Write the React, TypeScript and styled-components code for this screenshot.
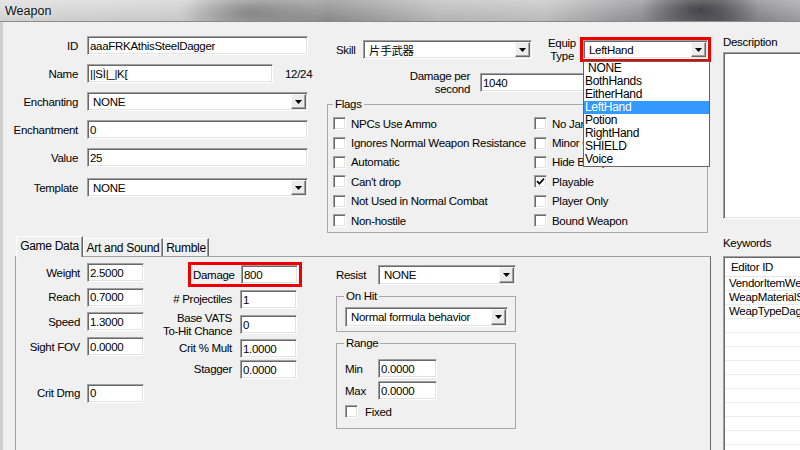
import React from 'react';
import styled, { createGlobalStyle, css } from 'styled-components';

// --- STYLES ---
const GlobalStyle = createGlobalStyle`
  *, *::before, *::after { box-sizing: border-box; }
  html, body { margin: 0; padding: 0; }
  body {
    width: 800px;
    height: 450px;
    overflow: hidden;
    background: #f0f0f0;
    color: #000;
    font-family: "Liberation Sans", "Noto Sans CJK JP", sans-serif;
    font-size: 11.5px;
    letter-spacing: -0.3px;
  }
`;

const sunken = css`
  border: 1px solid;
  border-color: #a0a0a0 #ffffff #ffffff #a0a0a0;
  box-shadow: inset 1px 1px 0 #696969, inset -1px -1px 0 #e3e3e3;
`;

const Window = styled.div`
  width: 800px;
  height: 450px;
  display: flex;
  flex-direction: column;
  overflow: hidden;
`;

const TitleBar = styled.div`
  flex: none;
  height: 22px;
  display: flex;
  align-items: center;
  padding-left: 5px;
  border-bottom: 1px solid #8a8a8a;
  background:
    radial-gradient(ellipse 70px 22px at 250px 12px, rgba(80, 80, 80, 0.45), transparent),
    radial-gradient(ellipse 60px 24px at 700px 10px, rgba(40, 40, 48, 0.7), transparent),
    linear-gradient(180deg, rgba(255, 255, 255, 0.25), rgba(0, 0, 0, 0.05)),
    linear-gradient(90deg, #dcdcdc 0%, #d2d2d2 22%, #a8a8a8 34%, #8e8e8e 41%, #bdbdbd 55%, #c4c4c4 68%, #8a8a8e 82%, #707074 90%, #a3a3a6 100%);
`;

const Title = styled.span`
  font-size: 12.5px;
  letter-spacing: 0;
  color: #111;
  text-shadow: 0 0 6px rgba(255, 255, 255, 0.8);
`;

const Body = styled.div`
  flex: 1;
  min-height: 0;
  display: flex;
  border-left: 3px solid;
  border-image: linear-gradient(90deg, #cfcfcf 0 66%, #7c7c7c 66%) 1;
`;

const MainColumn = styled.div`
  flex: none;
  width: 720px;
  display: flex;
  flex-direction: column;
`;

const SideColumn = styled.div`
  flex: 1;
  min-width: 0;
  overflow: hidden;
  padding-top: 13px;
  display: flex;
  flex-direction: column;
`;

const TopArea = styled.div`
  flex: none;
  height: 214px;
  display: flex;
`;

const LeftFields = styled.div`
  width: 324px;
  padding-top: 14px;
  display: flex;
  flex-direction: column;
  gap: 9px;
`;

const FieldRow = styled.div<{ $mt?: number }>`
  display: flex;
  align-items: center;
  height: 19px;
  margin-top: ${({ $mt }) => $mt ?? 0}px;
`;

const FieldLabel = styled.span`
  width: 75px;
  margin-right: 9px;
  text-align: right;
  white-space: nowrap;
`;

const Counter = styled.span`
  margin-left: 12px;
`;

const Input = styled.input<{ $w: number }>`
  ${sunken}
  width: ${({ $w }) => $w}px;
  height: 19px;
  flex: none;
  padding: 0 2px;
  background: #fff;
  font: inherit;
  letter-spacing: inherit;
  color: #000;
  outline: none;
`;

const SelectBox = styled.div<{ $w: number; $h?: number }>`
  ${sunken}
  width: ${({ $w }) => $w}px;
  height: ${({ $h }) => $h ?? 19}px;
  flex: none;
  display: flex;
  align-items: center;
  padding-left: 5px;
  background: #fff;
  white-space: nowrap;
  overflow: hidden;
`;

const SelectText = styled.span`
  flex: 1;
  min-width: 0;
`;

const ArrowButton = styled.span`
  flex: none;
  align-self: stretch;
  width: 15px;
  margin: 1px;
  display: flex;
  align-items: center;
  justify-content: center;
  background: #ececec;
  border: 1px solid;
  border-color: #f8f8f8 #696969 #696969 #f8f8f8;
  box-shadow: inset -1px -1px 0 #a0a0a0;
`;

const MiddleArea = styled.div`
  width: 384px;
  display: flex;
  flex-direction: column;
`;

const SkillRow = styled.div`
  display: flex;
  align-items: center;
  height: 25px;
  margin-top: 15px;
  padding-left: 9px;
`;

const InlineLabel = styled.span<{ $w: number }>`
  flex: none;
  width: ${({ $w }) => $w}px;
  white-space: nowrap;
`;

const StackLabel = styled.span<{ $w: number; $mr: number }>`
  flex: none;
  width: ${({ $w }) => $w}px;
  margin-right: ${({ $mr }) => $mr}px;
  line-height: 12.5px;
  text-align: right;
  white-space: nowrap;
`;

const Spacer = styled.span<{ $w: number }>`
  flex: none;
  width: ${({ $w }) => $w}px;
`;

const RedFrame = styled.div<{ $pad?: string }>`
  position: relative;
  flex: none;
  display: flex;
  align-items: center;
  border: 3px solid #ee0000;
  padding: ${({ $pad }) => $pad ?? '0'};
`;

const DropList = styled.ul`
  position: absolute;
  top: calc(100% + 2px);
  left: 0;
  z-index: 10;
  width: 127px;
  margin: 0;
  padding: 0;
  list-style: none;
  background: #fff;
  border: 1px solid #646464;
`;

const DropItem = styled.li<{ $active?: boolean }>`
  height: 13px;
  line-height: 13px;
  padding-left: 1px;
  font-size: 12px;
  white-space: nowrap;
  background: ${({ $active }) => ($active ? '#3399ff' : 'transparent')};
  color: ${({ $active }) => ($active ? '#fff' : '#000')};
`;

const DpsRow = styled.div`
  display: flex;
  align-items: center;
  height: 26px;
  margin-top: 7.5px;
  padding-left: 9px;
`;

const GroupBox = styled.fieldset<{ $w: number; $pad: string; $mt?: number }>`
  width: ${({ $w }) => $w}px;
  margin: ${({ $mt }) => $mt ?? 0}px 0 0 0;
  padding: ${({ $pad }) => $pad};
  min-width: 0;
  border: 1px solid #a8a8a8;
`;

const Legend = styled.legend<{ $ml?: number }>`
  padding: 0 2px;
  margin-left: ${({ $ml }) => $ml ?? 0}px;
  line-height: 14px;
`;

const CheckGrid = styled.div`
  display: grid;
  grid-template-columns: 201px 1fr;
  grid-template-rows: repeat(6, 19.4px);
  grid-auto-flow: column;
  align-items: center;
`;

const CheckItem = styled.label<{ $gap?: number }>`
  display: flex;
  align-items: center;
  gap: ${({ $gap }) => $gap ?? 5}px;
  white-space: nowrap;
  overflow: hidden;
`;

const CheckBox = styled.span`
  ${sunken}
  flex: none;
  width: 13px;
  height: 13px;
  background: #fff;
  display: flex;
  align-items: center;
  justify-content: center;
`;

const TabArea = styled.div`
  display: flex;
  flex-direction: column;
`;

const TabStrip = styled.div`
  display: flex;
  align-items: flex-end;
  height: 20px;
  padding-left: 13px;
  position: relative;
  z-index: 1;
`;

const Tab = styled.div<{ $active?: boolean; $w: number }>`
  width: ${({ $w }) => $w}px;
  height: ${({ $active }) => ($active ? 21 : 18)}px;
  margin-bottom: ${({ $active }) => ($active ? -1 : 0)}px;
  display: flex;
  align-items: ${({ $active }) => ($active ? 'flex-start' : 'center')};
  justify-content: center;
  padding-top: ${({ $active }) => ($active ? 2 : 0)}px;
  background: #f0f0f0;
  border: 1px solid;
  border-color: #ffffff #696969 transparent #ffffff;
  border-bottom: none;
  box-shadow: inset -1px 0 0 #a0a0a0;
  white-space: nowrap;
  font-size: 12px;
`;

const TabPane = styled.div`
  margin-left: 12px;
  width: 696px;
  height: 200px;
  border: 1px solid #a0a0a0;
  border-right-color: #696969;
  display: flex;
  align-items: flex-start;
  padding-top: 5px;
`;

const StatColumn = styled.div`
  display: flex;
  flex-direction: column;
  gap: 5.7px;
  margin-top: 1px;
`;

const StatLabel = styled.span`
  width: 64px;
  margin-right: 7px;
  text-align: right;
  white-space: nowrap;
`;

const DamageColumn = styled.div`
  width: 158px;
  display: flex;
  flex-direction: column;
  align-items: flex-end;
`;

const DamageRow = styled.div<{ $mt: number; $h?: number }>`
  display: flex;
  align-items: center;
  height: ${({ $h }) => $h ?? 19}px;
  margin-top: ${({ $mt }) => $mt}px;
  margin-right: 5px;
`;

const DamageLabel = styled.span`
  margin-right: 8px;
  line-height: 13px;
  text-align: right;
  white-space: nowrap;
`;

const ResistColumn = styled.div`
  width: 180px;
  margin-left: 34px;
  margin-top: 3px;
  display: flex;
  flex-direction: column;
`;

const PlainRow = styled.div<{ $mt?: number; $h?: number }>`
  display: flex;
  align-items: center;
  height: ${({ $h }) => $h ?? 19}px;
  margin-top: ${({ $mt }) => $mt ?? 0}px;
`;

const SideLabel = styled.div<{ $mt?: number }>`
  line-height: 14px;
  margin-top: ${({ $mt }) => $mt ?? 0}px;
  white-space: nowrap;
`;

const DescriptionBox = styled.div`
  ${sunken}
  flex: none;
  width: 120px;
  height: 167px;
  margin-top: 3px;
  background: #fff;
`;

const KeywordList = styled.div`
  ${sunken}
  flex: none;
  width: 120px;
  height: 200px;
  margin-top: 6px;
  background: #fff;
  padding: 1px;
`;

const ListHeader = styled.div`
  height: 19px;
  line-height: 18px;
  padding-left: 6px;
  border-bottom: 1px solid #e5e5e5;
  white-space: nowrap;
`;

const ListRow = styled.div`
  height: 14px;
  line-height: 13px;
  padding-left: 4px;
  border-bottom: 1px solid #ececec;
  white-space: nowrap;
`;
// --- END STYLES ---

const Arrow = () => (
  <svg width="7" height="4" viewBox="0 0 7 4">
    <path d="M0 0h7L3.5 4z" fill="#000" />
  </svg>
);

const Select: React.FC<{ w: number; h?: number; value: string }> = ({ w, h, value }) => (
  <SelectBox $w={w} $h={h}>
    <SelectText>{value}</SelectText>
    <ArrowButton>
      <Arrow />
    </ArrowButton>
  </SelectBox>
);

const Box: React.FC<{ w: number; value: string }> = ({ w, value }) => (
  <Input $w={w} value={value} readOnly />
);

const Check: React.FC<{ label: string; checked?: boolean; gap?: number }> = ({ label, checked, gap }) => (
  <CheckItem $gap={gap}>
    <CheckBox>
      {checked && (
        <svg width="9" height="9" viewBox="0 0 9 9">
          <path d="M1 4.2l2.4 2.5L8 1.6" fill="none" stroke="#000" strokeWidth="1.7" />
        </svg>
      )}
    </CheckBox>
    {label}
  </CheckItem>
);

const flagsLeft = [
  'NPCs Use Ammo',
  'Ignores Normal Weapon Resistance',
  'Automatic',
  "Can't drop",
  'Not Used in Normal Combat',
  'Non-hostile',
];
const flagsRight = ['No Jam After Reload', 'Minor Crime', 'Hide Backpack', 'Playable', 'Player Only', 'Bound Weapon'];
const equipTypes = ['\u00a0NONE', 'BothHands', 'EitherHand', 'LeftHand', 'Potion', 'RightHand', 'SHIELD', 'Voice'];
const stats = [
  ['Weight', '2.5000'],
  ['Reach', '0.7000'],
  ['Speed', '1.3000'],
  ['Sight FOV', '0.0000'],
];
const keywords = ['VendorItemWeapon', 'WeapMaterialSteel', 'WeapTypeDagger', '', '', '', '', '', '', '', '', ''];

const App: React.FC = () => (
  <>
    <GlobalStyle />
    <Window>
      <TitleBar>
        <Title>Weapon</Title>
      </TitleBar>
      <Body>
        <MainColumn>
          <TopArea>
            <LeftFields>
              <FieldRow>
                <FieldLabel>ID</FieldLabel>
                <Box w={221} value="aaaFRKAthisSteelDagger" />
              </FieldRow>
              <FieldRow>
                <FieldLabel>Name</FieldLabel>
                <Box w={186} value="||SÌ|_|K[" />
                <Counter>12/24</Counter>
              </FieldRow>
              <FieldRow>
                <FieldLabel>Enchanting</FieldLabel>
                <Select w={221} value="NONE" />
              </FieldRow>
              <FieldRow>
                <FieldLabel>Enchantment</FieldLabel>
                <Box w={221} value="0" />
              </FieldRow>
              <FieldRow>
                <FieldLabel>Value</FieldLabel>
                <Box w={221} value="25" />
              </FieldRow>
              <FieldRow $mt={2}>
                <FieldLabel>Template</FieldLabel>
                <Select w={221} value="NONE" />
              </FieldRow>
            </LeftFields>

            <MiddleArea>
              <SkillRow>
                <InlineLabel $w={27}>Skill</InlineLabel>
                <Select w={169} value="片手武器" />
                <Spacer $w={16} />
                <StackLabel $w={26} $mr={6}>
                  Equip
                  <br />
                  Type
                </StackLabel>
                <RedFrame>
                  <Select w={125} value="LeftHand" />
                  <DropList>
                    {equipTypes.map((t) => (
                      <DropItem key={t} $active={t === 'LeftHand'}>
                        {t}
                      </DropItem>
                    ))}
                  </DropList>
                </RedFrame>
              </SkillRow>
              <DpsRow>
                <StackLabel $w={134} $mr={10}>
                  Damage per
                  <br />
                  second
                </StackLabel>
                <Box w={130} value="1040" />
              </DpsRow>
              <GroupBox $w={381} $pad="3px 5px 2px 5px" $mt={1.5}>
                <Legend>Flags</Legend>
                <CheckGrid>
                  {flagsLeft.map((f) => (
                    <Check key={f} label={f} />
                  ))}
                  {flagsRight.map((f) => (
                    <Check key={f} label={f} checked={f === 'Playable'} />
                  ))}
                </CheckGrid>
              </GroupBox>
            </MiddleArea>
          </TopArea>

          <TabArea>
            <TabStrip>
              <Tab $active $w={67}>Game Data</Tab>
              <Tab $w={80}>Art and Sound</Tab>
              <Tab $w={46}>Rumble</Tab>
            </TabStrip>
            <TabPane>
              <StatColumn>
                {stats.map(([label, value]) => (
                  <FieldRow key={label}>
                    <StatLabel>{label}</StatLabel>
                    <Box w={57} value={value} />
                  </FieldRow>
                ))}
                <FieldRow $mt={22}>
                  <StatLabel>Crit Dmg</StatLabel>
                  <Box w={57} value="0" />
                </FieldRow>
              </StatColumn>

              <DamageColumn>
                <RedFrame $pad="0 1px 0 2px">
                  <InlineLabel $w={48}>Damage</InlineLabel>
                  <Box w={57} value="800" />
                </RedFrame>
                <DamageRow $mt={3}>
                  <DamageLabel># Projectiles</DamageLabel>
                  <Box w={57} value="1" />
                </DamageRow>
                <DamageRow $mt={2.5} $h={26}>
                  <DamageLabel>
                    Base VATS
                    <br />
                    To-Hit Chance
                  </DamageLabel>
                  <Box w={57} value="0" />
                </DamageRow>
                <DamageRow $mt={1.5}>
                  <DamageLabel>Crit % Mult</DamageLabel>
                  <Box w={57} value="1.0000" />
                </DamageRow>
                <DamageRow $mt={2}>
                  <DamageLabel>Stagger</DamageLabel>
                  <Box w={57} value="0.0000" />
                </DamageRow>
              </DamageColumn>

              <ResistColumn>
                <PlainRow $h={20}>
                  <InlineLabel $w={42}>Resist</InlineLabel>
                  <Select w={138} h={20} value="NONE" />
                </PlainRow>
                <GroupBox $w={180} $pad="4px 7px 4px 8px" $mt={4}>
                  <Legend $ml={-1}>On Hit</Legend>
                  <Select w={163} h={20} value="Normal formula behavior" />
                </GroupBox>
                <GroupBox $w={180} $pad="9px 7px 10px 8px" $mt={4}>
                  <Legend $ml={-1}>Range</Legend>
                  <PlainRow>
                    <InlineLabel $w={33}>Min</InlineLabel>
                    <Box w={59} value="0.0000" />
                  </PlainRow>
                  <PlainRow $mt={3}>
                    <InlineLabel $w={33}>Max</InlineLabel>
                    <Box w={59} value="0.0000" />
                  </PlainRow>
                  <PlainRow $mt={5} $h={13}>
                    <Check label="Fixed" gap={7} />
                  </PlainRow>
                </GroupBox>
              </ResistColumn>
            </TabPane>
          </TabArea>
        </MainColumn>

        <SideColumn>
          <SideLabel>Description</SideLabel>
          <DescriptionBox />
          <SideLabel $mt={17}>Keywords</SideLabel>
          <KeywordList>
            <ListHeader>Editor ID</ListHeader>
            {keywords.map((k, i) => (
              <ListRow key={i}>{k}</ListRow>
            ))}
          </KeywordList>
        </SideColumn>
      </Body>
    </Window>
  </>
);

export default App;
